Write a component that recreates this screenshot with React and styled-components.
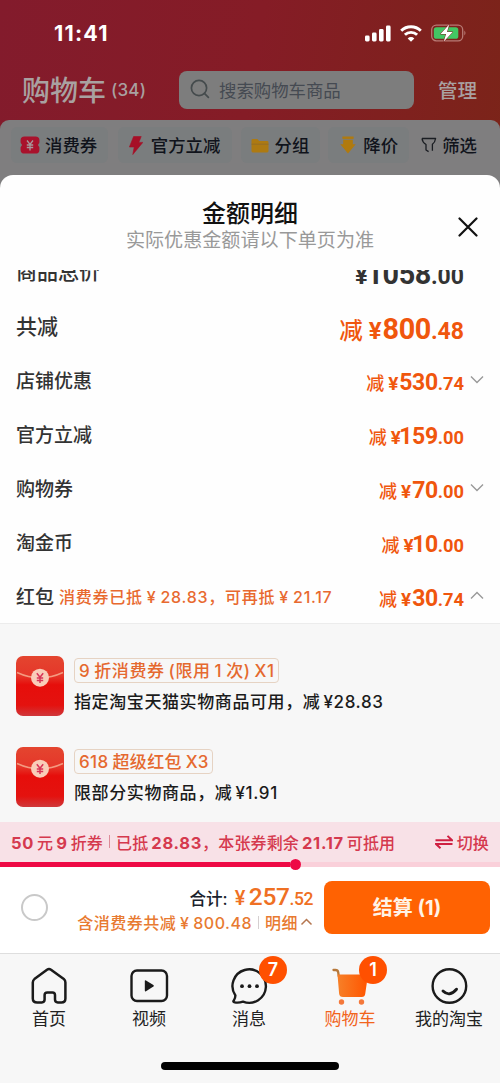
import React from 'react';
import styled, { createGlobalStyle } from 'styled-components';

const GlobalStyle = createGlobalStyle`
  * { box-sizing: border-box; }
  body {
    margin: 0;
    font-family: Inter, "Noto Sans CJK SC", sans-serif;
    background: #808080;
  }
  p { margin: 0; }
  svg { display: block; flex: none; }
`;

const Page = styled.div`
  width: 500px;
  height: 1083px;
  display: flex;
  flex-direction: column;
  overflow: hidden;
  white-space: nowrap;
  background: linear-gradient(100deg, #831b2c 0%, #851c26 50%, #7b2419 100%) 0 0 / 500px 175px no-repeat, #808080;
`;

const StatusBar = styled.div`
  height: 66px;
  flex: none;
  display: flex;
  justify-content: space-between;
  align-items: center;
  padding: 0 33px 0 54px;
  color: #fff;
`;

const Clock = styled.div`
  font-size: 21.5px;
  font-weight: 700;
  letter-spacing: 1.2px;
`;

const StatusIcons = styled.div`
  display: flex;
  align-items: center;
  gap: 9px;
`;

const Header = styled.div`
  height: 54px;
  flex: none;
  display: flex;
  align-items: center;
  padding: 0 22px 6px;
  color: #a9a1a1;
`;

const HeaderTitle = styled.div`
  width: 157px;
  display: flex;
  align-items: center;
  gap: 5px;
  padding-bottom: 3px;
  font-size: 28px;
  font-weight: 500;
  span {
    padding-top: 3px;
    font-size: 17px;
    letter-spacing: 0.2px;
  }
`;

const SearchBox = styled.div`
  width: 235px;
  height: 38px;
  display: flex;
  align-items: center;
  gap: 9px;
  padding-left: 11px;
  padding-bottom: 2px;
  border-radius: 8px;
  background: #7d7d7d;
  color: #454a52;
  font-size: 17.4px;
`;

const Manage = styled.div`
  margin-left: 24px;
  padding-bottom: 2px;
  font-size: 19.5px;
  font-weight: 500;
`;

const FilterBar = styled.div`
  height: 75px;
  flex: none;
  display: flex;
  align-items: flex-start;
  padding: 7px 11px;
  border-radius: 9px 9px 0 0;
  background: #7f7e7f;
  color: #10131b;
`;

const Chip = styled.div`
  width: ${({ $width }) => $width}px;
  height: 36px;
  margin-right: ${({ $gap }) => $gap}px;
  padding-left: ${({ $left }) => $left}px;
  padding-bottom: 2px;
  display: flex;
  align-items: center;
  gap: ${({ $space }) => $space}px;
  border-radius: 6px;
  background: ${({ $plain }) => ($plain ? 'none' : '#7a7d7e')};
  font-size: 17.4px;
  font-weight: 500;
  svg { position: relative; top: 1px; }
`;

const Sheet = styled.div`
  height: 778px;
  flex: none;
  display: flex;
  flex-direction: column;
  margin-top: -20px;
  border-radius: 13px 13px 0 0;
  background: #fefefe;
  overflow: hidden;
`;

const SheetHead = styled.div`
  height: 95px;
  flex: none;
  display: grid;
  grid-template-columns: 60px 1fr 60px;
  padding-top: 23px;
  text-align: center;
`;

const Title = styled.p`
  height: 31px;
  line-height: 31px;
  font-size: 24px;
  font-weight: 500;
  color: #111;
`;

const SubTitle = styled.p`
  height: 24px;
  line-height: 23px;
  font-size: 19.1px;
  color: #999;
`;

const Close = styled.div`
  grid-column: 3;
  padding: 19px 0 0 18px;
`;

const TitleBlock = styled.div`
  grid-column: 2;
`;

const List = styled.div`
  height: 353px;
  flex: none;
  overflow: hidden;
`;

const Row = styled.div`
  height: 54px;
  display: flex;
  align-items: center;
  padding: 0 16px;
  color: #333;
  &:first-child {
    height: 56px;
    margin-top: -28px;
  }
`;

const RowLabel = styled.div`
  font-size: ${({ $big }) => ($big ? 21 : 19)}px;
  font-weight: 500;
`;

const Note = styled.div`
  margin-left: 5px;
  padding-top: 2px;
  font-size: 16px;
  font-weight: 500;
  letter-spacing: 0.75px;
  word-spacing: -1px;
  color: #e8692f;
`;

const Amount = styled.div`
  margin-left: auto;
  margin-right: ${({ $edge }) => $edge || 0}px;
  height: 30px;
  display: flex;
  align-items: baseline;
  font-family: Roboto, "Noto Sans CJK SC", sans-serif;
  font-weight: 700;
  line-height: 30px;
  color: ${({ $dark }) => ($dark ? '#333' : '#f0560d')};
  padding-top: 4px;
`;

const Cut = styled.span`
  margin-right: ${({ $big }) => ($big ? 6 : 4)}px;
  font-size: ${({ $big }) => ($big ? 23.5 : 18)}px;
  font-weight: 500;
`;

const Yen = styled.span`
  font-size: ${({ $big }) => ($big ? 24 : 19)}px;
  margin-right: 1px;
`;

const Whole = styled.span`
  margin-left: ${({ $tight }) => ($tight ? -2.5 : 0)}px;
  font-size: ${({ $big }) => ($big ? 28.8 : 23)}px;
  letter-spacing: -0.4px;
`;

const Cents = styled.span`
  font-size: ${({ $big }) => ($big ? 23 : 18.3)}px;
`;

const Arrow = styled.div`
  width: 20px;
  display: flex;
  justify-content: flex-end;
`;

const Coupons = styled.div`
  height: 199px;
  flex: none;
  display: flex;
  flex-direction: column;
  gap: 31px;
  padding: 32px 16px 0;
  border-top: 1px solid #ececec;
  background: #f7f7f7;
`;

const Coupon = styled.div`
  height: 60px;
  display: flex;
  gap: 10px;
`;

const Tag = styled.div`
  width: ${({ $width }) => $width}px;
  height: 25px;
  margin-top: 2px;
  padding-left: 4px;
  border: 1px solid #e6d3c3;
  border-radius: 4px;
  line-height: 24px;
  font-size: 17px;
  font-weight: 500;
  letter-spacing: ${({ $spacing }) => $spacing}px;
  word-spacing: -1.2px;
  color: #e5692f;
`;

const Desc = styled.div`
  margin-top: 7px;
  line-height: 25px;
  font-size: 17px;
  font-weight: 500;
  letter-spacing: 0.6px;
  word-spacing: -2px;
  color: #1b1b1b;
`;

const Strip = styled.div`
  height: 40px;
  flex: none;
  display: flex;
  align-items: center;
  padding: 0 11px 1px;
  background: #f8e1e7;
  color: #d5394e;
  font-size: 16px;
  font-weight: 500;
  letter-spacing: 0.15px;
  word-spacing: -1.4px;
  b { font-weight: 700; font-size: 16.5px; letter-spacing: 0.7px; }
`;

const Divider = styled.i`
  width: 1px;
  height: 13px;
  margin: 0 ${({ $side }) => $side}px;
  background: ${({ $color }) => $color};
`;

const Switch = styled.div`
  margin-left: auto;
  display: flex;
  align-items: center;
  gap: 4px;
`;

const Track = styled.div`
  height: 5px;
  flex: none;
  display: flex;
  align-items: center;
  background: #fad0da;
`;

const TrackFill = styled.div`
  width: 290px;
  height: 5px;
  background: #ee0a45;
`;

const Knob = styled.div`
  position: relative;
  z-index: 1;
  width: 11px;
  height: 11px;
  flex: none;
  border-radius: 50%;
  background: #ee0a45;
`;

const PayBar = styled.div`
  height: 86px;
  flex: none;
  display: flex;
  align-items: center;
  padding: 0 10px 6px 21px;
  background: #fff;
`;

const Circle = styled.div`
  width: 27px;
  height: 27px;
  border: 2px solid #c9c9c9;
  border-radius: 50%;
`;

const Totals = styled.div`
  margin-left: auto;
  margin-right: 11px;
  padding-top: 4px;
  display: flex;
  flex-direction: column;
  align-items: flex-end;
`;

const TotalLine = styled.div`
  height: 26px;
  display: flex;
  align-items: baseline;
  line-height: 24px;
  font-size: 16.6px;
  font-weight: 500;
  color: #1b222c;
`;

const TotalDigits = styled.span`
  margin-left: ${({ $left }) => $left || 0}px;
  font-family: Roboto, "Noto Sans CJK SC", sans-serif;
  font-size: ${({ $size }) => $size}px;
  letter-spacing: -0.4px;
  color: #ef7023;
`;

const SavedLine = styled.div`
  height: 22px;
  display: flex;
  align-items: center;
  font-size: 16px;
  font-weight: 500;
  letter-spacing: 0.5px;
  word-spacing: -1px;
  color: #e87a31;
  svg { margin-left: 2px; }
`;

const PayButton = styled.div`
  width: 166px;
  height: 53px;
  display: flex;
  align-items: center;
  justify-content: center;
  padding-bottom: 2px;
  border-radius: 8px;
  background: #ff6202;
  color: #fff3e6;
  font-size: 20px;
  font-weight: 700;
`;

const TabBar = styled.div`
  height: 130px;
  flex: none;
  display: grid;
  grid-template: 100px 30px / repeat(5, 100px);
  border-top: 1px solid #dedede;
  background: #f7f7f7;
`;

const Tab = styled.div`
  position: relative;
  display: flex;
  flex-direction: column;
  align-items: center;
  padding-top: 12px;
  padding-right: ${({ $active }) => ($active ? 0 : 2)}px;
  font-size: 17px;
  line-height: 24px;
  color: ${({ $active }) => ($active ? '#f2641c' : '#222')};
  svg { margin-bottom: 1px; }
`;

const Badge = styled.div`
  position: absolute;
  left: 59px;
  top: 2px;
  width: 28px;
  height: 28px;
  border-radius: 50%;
  background: #ff5000;
  color: #fff;
  font-size: 18px;
  font-weight: 600;
  line-height: 28px;
  text-align: center;
`;

const HomeIndicator = styled.div`
  grid-column: 1 / -1;
  justify-self: center;
  width: 178px;
  height: 8px;
  margin-top: 8px;
  border-radius: 4px;
  background: #000;
`;

const SignalIcon = () => (
  <svg width="26" height="17" viewBox="0 0 26 17" fill="#fff">
    <rect x="0" y="10.5" width="4.6" height="6" rx="1.4" />
    <rect x="7" y="7.5" width="4.6" height="9" rx="1.4" />
    <rect x="14" y="4" width="4.6" height="12.5" rx="1.4" />
    <rect x="21" y="0.5" width="4.6" height="16" rx="1.4" />
  </svg>
);

const WifiIcon = () => (
  <svg width="22" height="17" viewBox="0 0 22 17" fill="none" stroke="#fff" strokeWidth="2.9">
    <path d="M1.2 5.8a14 14 0 0 1 19.6 0" />
    <path d="M4.9 9.8a8.8 8.8 0 0 1 12.2 0" />
    <path d="M11 16.8 7.7 13.4a4.7 4.7 0 0 1 6.6 0z" fill="#fff" stroke="none" />
  </svg>
);

const BatteryIcon = () => (
  <svg width="36" height="18" viewBox="0 0 36 18">
    <rect x="0.7" y="1.2" width="31" height="15.6" rx="4.6" fill="none" stroke="#b77a74" strokeWidth="1.3" />
    <path d="M33.3 6.5q2.4 2.5 0 5z" fill="#b77a74" />
    <rect x="2.8" y="3.2" width="24.5" height="11.6" rx="2.6" fill="#42c763" />
    <path d="M18.2.5 9.5 10h5.6l-2.3 7.5L21.7 8H16z" fill="#fff" stroke="#7d231f" strokeWidth="1" paintOrder="stroke" />
  </svg>
);

const SearchIcon = () => (
  <svg width="20" height="20" viewBox="0 0 20 20" fill="none" stroke="#454b4d" strokeWidth="1.7">
    <circle cx="9" cy="9" r="7.6" />
    <path d="m14.4 14.4 4 4" strokeLinecap="round" />
  </svg>
);

const TicketIcon = () => (
  <svg width="20" height="18" viewBox="0 0 20 18">
    <path d="M4.6.5h10.8q4 0 4 3.6v2.2q0 1-.9 1.6-1 1 0 2 .9.7.9 1.700v2.300q0 3.600-4 3.600H4.600q-4 0-4-3.600v-2.300q0-1 .9-1.700 1-1 0-2-.9-.6-.9-1.600V4.100Q.6.5 4.600.5z" fill="#a9122c" />
    <path d="m7 4.500 3 4 3-4M6.800 9h6.400M6.800 11.500h6.400M10 8.500v6" fill="none" stroke="#a59a9c" strokeWidth="1.3" />
  </svg>
);

const BoltIcon = () => (
  <svg width="14" height="19" viewBox="0 0 14 19">
    <path d="M4.6.5h7.6L9.8 6.4h4L3.8 18.5 5.200 11H.4z" fill="#a60f27" stroke="#a60f27" strokeWidth="0.6" strokeLinejoin="round" />
  </svg>
);

const FolderIcon = () => (
  <svg width="18" height="15" viewBox="0 0 18 15">
    <path d="M1.8 1h4.6l1.7 2h8q1.4 0 1.4 1.4V13q0 1.4-1.4 1.4H1.8Q.5 14.4.5 13V2.4Q.5 1 1.8 1z" fill="#ad7a12" />
    <path d="M.5 6.2h17" stroke="#8f692a" strokeWidth="0.8" />
  </svg>
);

const DropIcon = () => (
  <svg width="16" height="18" viewBox="0 0 16 18" fill="#b07a0e">
    <rect x="2.4" y="0.5" width="11.2" height="2.4" />
    <path d="M3.200 3.700h9.600v4.600h2.900L8 17.500.3 8.300h2.900z" />
  </svg>
);

const FunnelIcon = () => (
  <svg width="16" height="16" viewBox="0 0 16 16" fill="none" stroke="#1a1d22" strokeWidth="1.3" strokeLinejoin="round">
    <path d="M1 1.500h13.600q-.5 3.700-3.200 5.800v6.400M1 1.500q.4 3.800 4 6v5.500l2.600 1.600" />
  </svg>
);

const Chevron = ({ up }) => (
  <svg width="14" height="9" viewBox="0 0 14 9" fill="none" stroke="#999" strokeWidth="1.4">
    <path d={up ? 'M1 7.5 7 1.5l6 6' : 'M1 1.5l6 6 6-6'} />
  </svg>
);

const Envelope = ({ id }) => (
  <svg width="48" height="60" viewBox="0 0 48 60">
    <defs>
      <linearGradient id={id} x1="0" y1="0" x2="0" y2="1">
        <stop offset="0" stopColor="#e4452f" />
        <stop offset="0.33" stopColor="#e5372a" />
        <stop offset="0.48" stopColor="#e60e0b" />
        <stop offset="0.82" stopColor="#e4120f" />
        <stop offset="1" stopColor="#cf383b" />
      </linearGradient>
    </defs>
    <rect width="48" height="60" rx="7" fill={`url(#${id})`} />
    <path d="M1 16.5q23 10.5 46 0" fill="none" stroke="#f49a80" strokeWidth="1.4" />
    <circle cx="24" cy="21.7" r="9" fill="#f9cdb9" />
    <path d="m20.8 17.2 3.2 4 3.2-4M20.8 22h6.4M20.8 24.4h6.4M24 21.5v5.5" fill="none" stroke="#d83558" strokeWidth="1.5" />
  </svg>
);

const SwapIcon = () => (
  <svg width="18" height="14" viewBox="0 0 18 14" fill="none" stroke="#cf2042" strokeWidth="2">
    <path d="M.5 5.2H17L12.5.9M17.5 9H1l4.5 4.2" />
  </svg>
);

const HomeIcon = () => (
  <svg width="40" height="40" viewBox="0 0 40 40" fill="none" stroke="#1b1b1b" strokeWidth="2.5" strokeLinejoin="round">
    <path d="M18 3.8q2-1.5 4 0L34.8 13q1.6 1.3 1.6 3.4v16q0 4-4 4h-3.6q-2.8 0-2.8-2.8V29q0-2.6-2.6-2.6h-5Q15.6 26.4 15.6 29v4.6q0 2.8-2.8 2.8H8.2q-4.4 0-4.4-4V16.4q0-2 1.6-3.3z" />
  </svg>
);

const VideoIcon = () => (
  <svg width="40" height="40" viewBox="0 0 40 40">
    <rect x="2.5" y="4.5" width="35.5" height="30.5" rx="5.5" fill="none" stroke="#1b1b1b" strokeWidth="2.4" />
    <path d="M15.8 15v9.6q0 1.2 1.2.6l7.4-4.6q1-.8 0-1.5L17 14.4q-1.2-.6-1.2.6z" fill="#1b1b1b" />
  </svg>
);

const MessageIcon = () => (
  <svg width="40" height="40" viewBox="0 0 40 40">
    <path d="M6.4 29.5A16.7 16.7 0 1 1 14 35.6q-4 1.4-8.3.8-2.2-.3-.8-2.2 1.4-2 1.5-4.7z" fill="none" stroke="#1b1b1b" strokeWidth="2.4" strokeLinejoin="round" />
    <circle cx="13" cy="20.2" r="1.9" fill="#1b1b1b" />
    <circle cx="20.5" cy="20.2" r="1.9" fill="#1b1b1b" />
    <circle cx="28" cy="20.2" r="1.9" fill="#1b1b1b" />
  </svg>
);

const CartIcon = () => (
  <svg width="40" height="40" viewBox="0 0 40 40">
    <defs>
      <linearGradient id="cart" x1="0" y1="0" x2="1" y2="0">
        <stop offset="0" stopColor="#f78028" />
        <stop offset="1" stopColor="#ff5500" />
      </linearGradient>
    </defs>
    <path d="M3.5 4h2q2.3 0 2.7 2.3l.6 4" fill="none" stroke="#b7783a" strokeWidth="2.3" strokeLinecap="round" />
    <path d="M7.500 8.500h27.500q3 0 2.600 3l-2.400 16.500q-.4 3-3.400 3H13q-3.600 0-3.900-3.500z" fill="url(#cart)" />
    <circle cx="11.500" cy="36" r="2.7" fill="#f4783b" />
    <circle cx="31.500" cy="36" r="2.7" fill="#f4783b" />
  </svg>
);

const SmileIcon = () => (
  <svg width="40" height="40" viewBox="0 0 40 40" fill="none" stroke="#1b1b1b" strokeLinecap="round">
    <circle cx="20.4" cy="20" r="16.8" strokeWidth="2.4" />
    <path d="M14 25q6.5 6.5 13.5-1.8" strokeWidth="2.9" />
  </svg>
);

const rows = [
  { label: '商品总价', whole: '1058', cents: '.00', big: true, dark: true },
  { label: '共减', whole: '800', cents: '.48', big: true },
  { label: '店铺优惠', whole: '530', cents: '.74', arrow: 'down' },
  { label: '官方立减', whole: '159', cents: '.00' },
  { label: '购物券', whole: '70', cents: '.00', arrow: 'down' },
  { label: '淘金币', whole: '10', cents: '.00' },
  { label: '红包', note: '消费券已抵 ¥ 28.83，可再抵 ¥ 21.17', whole: '30', cents: '.74', arrow: 'up' },
];

const coupons = [
  { tag: '9 折消费券 (限用 1 次) X1', width: 205, spacing: 0.6, desc: '指定淘宝天猫实物商品可用，减 ¥28.83' },
  { tag: '618 超级红包 X3', width: 139, spacing: 0.4, desc: '限部分实物商品，减 ¥1.91' },
];

const tabs = [
  { name: '首页', icon: <HomeIcon /> },
  { name: '视频', icon: <VideoIcon /> },
  { name: '消息', icon: <MessageIcon />, badge: 7 },
  { name: '购物车', icon: <CartIcon />, badge: 1, active: true },
  { name: '我的淘宝', icon: <SmileIcon /> },
];

const PriceRow = ({ label, note, whole, cents, big, dark, arrow }) => (
  <Row>
    <RowLabel $big={big}>{label}</RowLabel>
    {note && <Note>{note}</Note>}
    <Amount $dark={dark} $edge={arrow ? 0 : 20}>
      {!dark && <Cut $big={big}>减</Cut>}
      <Yen $big={big}>¥</Yen>
      <Whole $big={big} $tight={whole[0] === '1'}>{whole}</Whole>
      <Cents $big={big}>{cents}</Cents>
    </Amount>
    {arrow && <Arrow><Chevron up={arrow === 'up'} /></Arrow>}
  </Row>
);

export default function App() {
  return (
    <Page>
      <GlobalStyle />
      <StatusBar>
        <Clock>11:41</Clock>
        <StatusIcons>
          <SignalIcon />
          <WifiIcon />
          <BatteryIcon />
        </StatusIcons>
      </StatusBar>
      <Header>
        <HeaderTitle>购物车<span>(34)</span></HeaderTitle>
        <SearchBox><SearchIcon />搜索购物车商品</SearchBox>
        <Manage>管理</Manage>
      </Header>
      <FilterBar>
        <Chip $width={97} $gap={10} $left={9} $space={5}><TicketIcon />消费券</Chip>
        <Chip $width={114} $gap={9} $left={11} $space={8}><BoltIcon />官方立减</Chip>
        <Chip $width={80} $gap={8} $left={10} $space={6}><FolderIcon />分组</Chip>
        <Chip $width={81} $gap={10} $left={12} $space={7}><DropIcon />降价</Chip>
        <Chip $width={70} $gap={0} $left={2} $space={5} $plain><FunnelIcon />筛选</Chip>
      </FilterBar>
      <Sheet>
        <SheetHead>
          <TitleBlock>
            <Title>金额明细</Title>
            <SubTitle>实际优惠金额请以下单页为准</SubTitle>
          </TitleBlock>
          <Close>
            <svg width="20" height="20" viewBox="0 0 20 20" stroke="#111" strokeWidth="2.2" strokeLinecap="round">
              <path d="m1.5 1.5 17 17M18.5 1.5l-17 17" />
            </svg>
          </Close>
        </SheetHead>
        <List>
          {rows.map((row) => <PriceRow key={row.label} {...row} />)}
        </List>
        <Coupons>
          {coupons.map((coupon, i) => (
            <Coupon key={coupon.tag}>
              <Envelope id={`env${i}`} />
              <div>
                <Tag $width={coupon.width} $spacing={coupon.spacing}>{coupon.tag}</Tag>
                <Desc>{coupon.desc}</Desc>
              </div>
            </Coupon>
          ))}
        </Coupons>
        <Strip>
          <span><b>50</b> 元 <b>9</b> 折券</span>
          <Divider $side={6} $color="#dd8b99" />
          <span>已抵 <b>28.83</b>，本张券剩余 <b>21.17</b> 可抵用</span>
          <Switch><SwapIcon />切换</Switch>
        </Strip>
        <Track>
          <TrackFill />
          <Knob />
        </Track>
        <PayBar>
          <Circle />
          <Totals>
            <TotalLine>
              合计:
              <TotalDigits $size={20} $left={7}>¥</TotalDigits>
              <TotalDigits $size={24.5} $left={4}>257</TotalDigits>
              <TotalDigits $size={17.5}>.52</TotalDigits>
            </TotalLine>
            <SavedLine>
              含消费券共减 ¥ 800.48
              <Divider $side={6} $color="#d5cfd0" />
              明细
              <svg width="13" height="8" viewBox="0 0 13 8" fill="none" stroke="#b5764f" strokeWidth="1.5">
                <path d="m1.5 6.5 5-5 5 5" />
              </svg>
            </SavedLine>
          </Totals>
          <PayButton>结算 (1)</PayButton>
        </PayBar>
      </Sheet>
      <TabBar>
        {tabs.map(({ name, icon, badge, active }) => (
          <Tab key={name} $active={active}>
            {icon}
            {name}
            {badge && <Badge>{badge}</Badge>}
          </Tab>
        ))}
        <HomeIndicator />
      </TabBar>
    </Page>
  );
}
